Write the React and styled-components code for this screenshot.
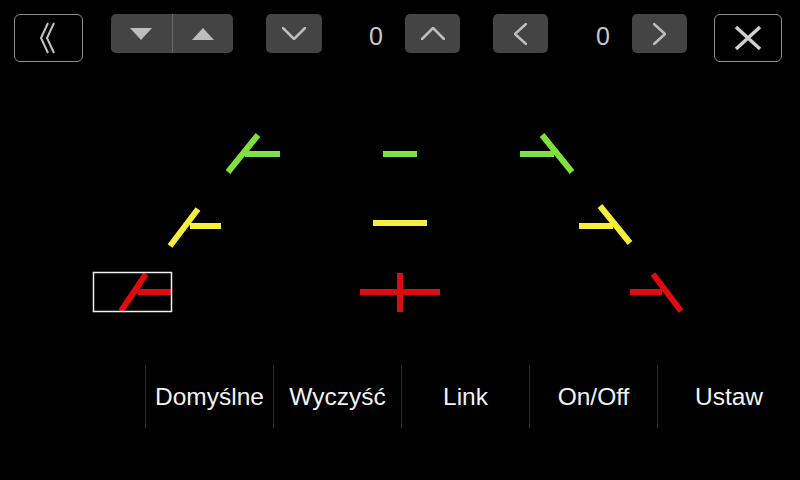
import React from 'react'
import styled, { createGlobalStyle } from 'styled-components'

const Global = createGlobalStyle`
  html, body {
    margin: 0;
    padding: 0;
    background: #000;
  }
  body {
    font-family: "Liberation Sans", Arial, sans-serif;
  }
`

const Screen = styled.div`
  width: 800px;
  height: 480px;
  background: #000;
  display: flex;
  flex-direction: column;
  overflow: hidden;
`

const Toolbar = styled.div`
  display: flex;
  align-items: flex-start;
  padding: 14px 0 0 14px;
  height: 48px;
`

const OutlineBtn = styled.button`
  width: ${p => p.$w}px;
  height: 48px;
  margin-left: ${p => p.$ml || 0}px;
  border: 1.5px solid #8c8c8c;
  border-radius: 6px;
  background: transparent;
  padding: 0;
  display: flex;
  align-items: center;
  justify-content: center;
  box-sizing: border-box;
`

const GreyBtn = styled.button`
  width: ${p => p.$w || 55}px;
  height: 39px;
  margin-left: ${p => p.$ml || 0}px;
  border: none;
  border-radius: 5px;
  background: #444;
  padding: 0;
  display: flex;
  align-items: center;
  justify-content: center;
`

const BtnGroup = styled.div`
  display: flex;
  width: 122px;
  height: 39px;
  margin-left: ${p => p.$ml || 0}px;
  border-radius: 5px;
  overflow: hidden;
  background: #444;
`

const GroupHalf = styled.button`
  flex: 1;
  border: none;
  background: transparent;
  padding: 0;
  display: flex;
  align-items: center;
  justify-content: center;
  & + & {
    border-left: 1px solid #6a6a6a;
  }
`

const Value = styled.div`
  width: 30px;
  margin-left: ${p => p.$ml || 0}px;
  line-height: 45px;
  font-size: 25px;
  color: #c8c8c8;
  text-align: center;
`

const Canvas = styled.div`
  height: 303px;
  svg {
    display: block;
  }
`

const BottomBar = styled.div`
  display: grid;
  grid-template-columns: 128px 128px 128px 128px 1fr;
  padding-left: 145px;
  height: 63px;
`

const Action = styled.button`
  border: none;
  border-left: 1px solid #2c2c2c;
  background: transparent;
  color: #f2f2f2;
  font-family: "Liberation Sans", Arial, sans-serif;
  font-size: 24.5px;
  padding: 0;
  display: flex;
  align-items: center;
  justify-content: center;
`

const GREEN = '#80e040'
const YELLOW = '#f6ee3c'
const RED = '#e00a10'

const guides = [
  // green row
  { c: GREEN, d: 'M258 135 L228 172 M245 154 L280 154' },
  { c: GREEN, d: 'M383 154 L417 154' },
  { c: GREEN, d: 'M520 154 L554 154 M542 135 L572 172' },
  // yellow row
  { c: YELLOW, d: 'M198 209 L170 246 M190 226 L221 226' },
  { c: YELLOW, d: 'M373 223 L427 223' },
  { c: YELLOW, d: 'M579 226 L613 226 M600 206 L630 243' },
  // red row
  { c: RED, d: 'M146 274 L121 311 M138 292 L171 292' },
  { c: RED, d: 'M360 292 L440 292 M400 273 L400 312' },
  { c: RED, d: 'M630 292 L662 292 M653 274 L681 311' },
]

const stroke = { fill: 'none', stroke: '#bdbdbd', strokeWidth: 2.5, strokeLinecap: 'round', strokeLinejoin: 'round' }

function Chevron({ dir }) {
  const pts = {
    down: '1,1 12,12 23,1',
    up: '1,12 12,1 23,12',
    left: '12,1 1,11 12,21',
    right: '1,1 12,11 1,21',
  }[dir]
  const horiz = dir === 'left' || dir === 'right'
  return (
    <svg width={horiz ? 13 : 24} height={horiz ? 22 : 13} viewBox={horiz ? '0 0 13 22' : '0 0 24 13'}>
      <polyline points={pts} {...stroke} />
    </svg>
  )
}

function Triangle({ up }) {
  return (
    <svg width="22" height="12" viewBox="0 0 22 12">
      <polygon points={up ? '0,12 22,12 11,0' : '0,0 22,0 11,12'} fill="#bdbdbd" />
    </svg>
  )
}

export default function App() {
  return (
    <Screen>
      <Global />
      <Toolbar>
        <OutlineBtn $w={69}>
          <svg width="20" height="32" viewBox="0 0 20 32">
            <polyline points="9,1 2,16 9,31" fill="none" stroke="#c4c4c4" strokeWidth="2" />
            <polyline points="15,1 8,16 15,31" fill="none" stroke="#c4c4c4" strokeWidth="2" />
          </svg>
        </OutlineBtn>
        <BtnGroup $ml={28}>
          <GroupHalf><Triangle /></GroupHalf>
          <GroupHalf><Triangle up /></GroupHalf>
        </BtnGroup>
        <GreyBtn $w={56} $ml={33}><Chevron dir="down" /></GreyBtn>
        <Value $ml={39}>0</Value>
        <GreyBtn $ml={14}><Chevron dir="up" /></GreyBtn>
        <GreyBtn $ml={33}><Chevron dir="left" /></GreyBtn>
        <Value $ml={40}>0</Value>
        <GreyBtn $ml={14}><Chevron dir="right" /></GreyBtn>
        <OutlineBtn $w={68} $ml={27}>
          <svg width="28" height="26" viewBox="0 0 28 26">
            <path d="M2 2 L26 24 M26 2 L2 24" stroke="#cfcfcf" strokeWidth="3.5" />
          </svg>
        </OutlineBtn>
      </Toolbar>
      <Canvas>
        <svg width="800" height="303" viewBox="0 62 800 303">
          {guides.map((g, i) => (
            <path key={i} d={g.d} stroke={g.c} strokeWidth="6" fill="none" />
          ))}
          <rect x="93.5" y="272.5" width="78" height="39" fill="none" stroke="#f0f0f0" strokeWidth="1.5" />
        </svg>
      </Canvas>
      <BottomBar>
        {['Domyślne', 'Wyczyść', 'Link', 'On/Off', 'Ustaw'].map(label => (
          <Action key={label}>{label}</Action>
        ))}
      </BottomBar>
    </Screen>
  )
}
